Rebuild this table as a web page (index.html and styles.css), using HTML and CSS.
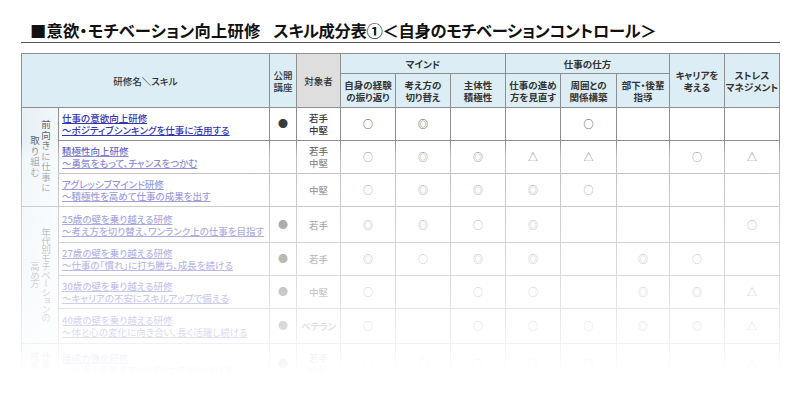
FILE: index.html
```html
<!DOCTYPE html>
<html lang="ja">
<head>
<meta charset="utf-8">
<title>スキル成分表</title>
<link rel="stylesheet" href="styles.css">
</head>
<body>
<div class="page">
  <h1 class="title"><span class="t1">■意欲・モチベーション向上研修</span><span class="gap"></span><span class="t2">スキル成分表①＜自身のモチベーションコントロール＞</span></h1>
  <table class="skills">
    <colgroup>
      <col class="c-cat"><col class="c-name"><col class="c-open"><col class="c-target">
      <col class="c-s"><col class="c-s"><col class="c-s"><col class="c-s"><col class="c-s56"><col class="c-s53"><col class="c-s"><col class="c-s">
    </colgroup>
    <thead>
      <tr class="hr1">
        <th colspan="2" rowspan="2" class="h-plain">研修名＼スキル</th>
        <th rowspan="2" class="h-plain">公開<br>講座</th>
        <th rowspan="2" class="h-plain h-target">対象者</th>
        <th colspan="3">マインド</th>
        <th colspan="3">仕事の仕方</th>
        <th rowspan="2">キャリアを<br>考える</th>
        <th rowspan="2">ストレス<br>マネジメント</th>
      </tr>
      <tr class="hr2">
        <th>自身の経験<br>の振り返り</th>
        <th>考え方の<br>切り替え</th>
        <th>主体性<br>積極性</th>
        <th>仕事の進め<br>方を見直す</th>
        <th>周囲との<br>関係構築</th>
        <th>部下・後輩<br>指導</th>
      </tr>
    </thead>
    <tbody>
      <tr class="r33">
        <td rowspan="3" class="cat"><div class="vt vt-wide">前向きに仕事に取り組む</div></td>
        <td class="name"><a href="#">仕事の意欲向上研修<br>～ポジティブシンキングを仕事に活用する</a></td>
        <td class="mk">●</td><td class="tg">若手<br>中堅</td>
        <td class="mk">○</td><td class="mk">◎</td><td></td><td></td><td class="mk">○</td><td></td><td></td><td></td>
      </tr>
      <tr class="r33">
        <td class="name"><a href="#">積極性向上研修<br>～勇気をもって、チャンスをつかむ</a></td>
        <td></td><td class="tg">若手<br>中堅</td>
        <td class="mk">○</td><td class="mk">◎</td><td class="mk">◎</td><td class="mk">△</td><td class="mk">△</td><td></td><td class="mk">○</td><td class="mk">△</td>
      </tr>
      <tr class="r33">
        <td class="name"><a href="#">アグレッシブマインド研修<br>～積極性を高めて仕事の成果を出す</a></td>
        <td></td><td class="tg">中堅</td>
        <td class="mk">○</td><td class="mk">◎</td><td class="mk">◎</td><td class="mk">◎</td><td class="mk">○</td><td></td><td></td><td></td>
      </tr>
      <tr class="r36">
        <td rowspan="4" class="cat"><div class="vt vt-tight">年代別モチベーションの高め方</div></td>
        <td class="name"><a href="#">25歳の壁を乗り越える研修<br>～考え方を切り替え、ワンランク上の仕事を目指す</a></td>
        <td class="mk">●</td><td class="tg">若手</td>
        <td class="mk">◎</td><td class="mk">◎</td><td class="mk">○</td><td class="mk">◎</td><td></td><td></td><td></td><td class="mk">○</td>
      </tr>
      <tr class="r33">
        <td class="name"><a href="#">27歳の壁を乗り越える研修<br>～仕事の「慣れ」に打ち勝ち、成長を続ける</a></td>
        <td class="mk">●</td><td class="tg">若手</td>
        <td class="mk">◎</td><td class="mk">○</td><td class="mk">◎</td><td class="mk">◎</td><td></td><td class="mk">◎</td><td class="mk">○</td><td></td>
      </tr>
      <tr class="r33">
        <td class="name"><a href="#">30歳の壁を乗り越える研修<br>～キャリアの不安にスキルアップで備える</a></td>
        <td class="mk">●</td><td class="tg">中堅</td>
        <td class="mk">○</td><td></td><td class="mk">○</td><td class="mk">○</td><td></td><td class="mk">◎</td><td class="mk">◎</td><td class="mk">△</td>
      </tr>
      <tr class="r35">
        <td class="name"><a href="#">40歳の壁を乗り越える研修<br>～体と心の変化に向き合い、長く活躍し続ける</a></td>
        <td class="mk">●</td><td class="tg">ベテラン</td>
        <td class="mk">○</td><td></td><td class="mk">○</td><td class="mk">○</td><td class="mk">○</td><td class="mk">◎</td><td class="mk">◎</td><td class="mk">△</td>
      </tr>
      <tr class="r35">
        <td class="cat cat-top"><div class="vt">仕事の成果</div></td>
        <td class="name"><a href="#">達成力強化研修<br>～仕事を最後までやり抜く力を身に付ける</a></td>
        <td class="mk">●</td><td class="tg">若手<br>中堅</td>
        <td class="mk">○</td><td class="mk">○</td><td class="mk">○</td><td class="mk">◎</td><td class="mk">◎</td><td></td><td></td><td class="mk">△</td>
      </tr>
    </tbody>
  </table>
  <div class="fade"></div>
</div>
</body>
</html>
```
FILE: styles.css
```css
* { box-sizing: border-box; }
html, body { margin: 0; padding: 0; background: #fff; }
body {
  font-family: "Noto Sans CJK JP", "Noto Sans", sans-serif;
  color: #333;
}
.page {
  position: relative;
  width: 800px;
  height: 395px;
  overflow: hidden;
  padding-left: 21px;
}
.title {
  margin: 0;
  width: 759px;
  padding: 20px 0 2px 9px;
  font-size: 16.3px;
  line-height: 20px;
  font-weight: 700;
  color: #111;
  white-space: nowrap;
  font-feature-settings: "palt";
  border-bottom: 1px solid #555;
}
.t1 { letter-spacing: 0.2px; }
.t2 { letter-spacing: -0.3px; }
.gap { display: inline-block; width: 13px; }

.skills {
  margin-top: 10px;
  border-collapse: collapse;
  table-layout: fixed;
  width: 759px;
  font-size: 9.5px;
  font-feature-settings: "palt";
}
.c-cat { width: 37px; }
.c-name { width: 211px; }
.c-open { width: 27px; }
.c-target { width: 44px; }
.c-s { width: 55px; }
.c-s56 { width: 56px; }
.c-s53 { width: 53px; }

.skills th, .skills td {
  border: 1px solid #8f8f8f;
  padding: 0;
  text-align: center;
  vertical-align: middle;
  line-height: 12px;
  overflow: hidden;
}
.skills th {
  background: #dcedf5;
  font-weight: 700;
  color: #333;
}
.skills th.h-plain { font-weight: 500; color: #333; }
.skills th.h-target { background: #dedede; }
.hr1 { height: 20px; }
.hr2 { height: 34px; }
.r33 { height: 33px; }
.r35 { height: 35px; }
.r36 { height: 36px; }

.skills td.name {
  text-align: left;
  padding-left: 3px;
  white-space: nowrap;
  font-weight: 500;
}
.name a {
  color: #3434b4;
  text-decoration: underline;
}
.skills td.mk {
  font-size: 10px;
  color: #3a3a3a;
}
.skills td.tg { color: #3a3a3a; font-weight: 500; }

.skills td.cat {
  background: linear-gradient(90deg, #e6f0f6, #f2f7fa);
  color: #666;
}
.skills td.cat-top { vertical-align: top; }
.vt {
  writing-mode: vertical-rl;
  height: 80px;
  margin: 0 auto;
  font-size: 9.5px;
  line-height: 11px;
  text-align: center;
  font-feature-settings: normal;
}
.vt-wide { letter-spacing: 1px; height: 78px; }
.vt-tight { height: 100px; letter-spacing: -1px; }
.cat-top .vt { text-align: start; padding-top: 8px; height: 40px; }

.fade {
  position: absolute;
  left: 0;
  right: 0;
  top: 141px;
  bottom: 0;
  background: linear-gradient(180deg,
    rgba(255,255,255,0) 0px,
    rgba(255,255,255,0.42) 16px,
    rgba(255,255,255,0.5) 49px,
    rgba(255,255,255,0.58) 83px,
    rgba(255,255,255,0.64) 117px,
    rgba(255,255,255,0.72) 150px,
    rgba(255,255,255,0.82) 185px,
    rgba(255,255,255,0.88) 202px,
    rgba(255,255,255,0.95) 219px,
    rgba(255,255,255,1) 234px);
}
```
